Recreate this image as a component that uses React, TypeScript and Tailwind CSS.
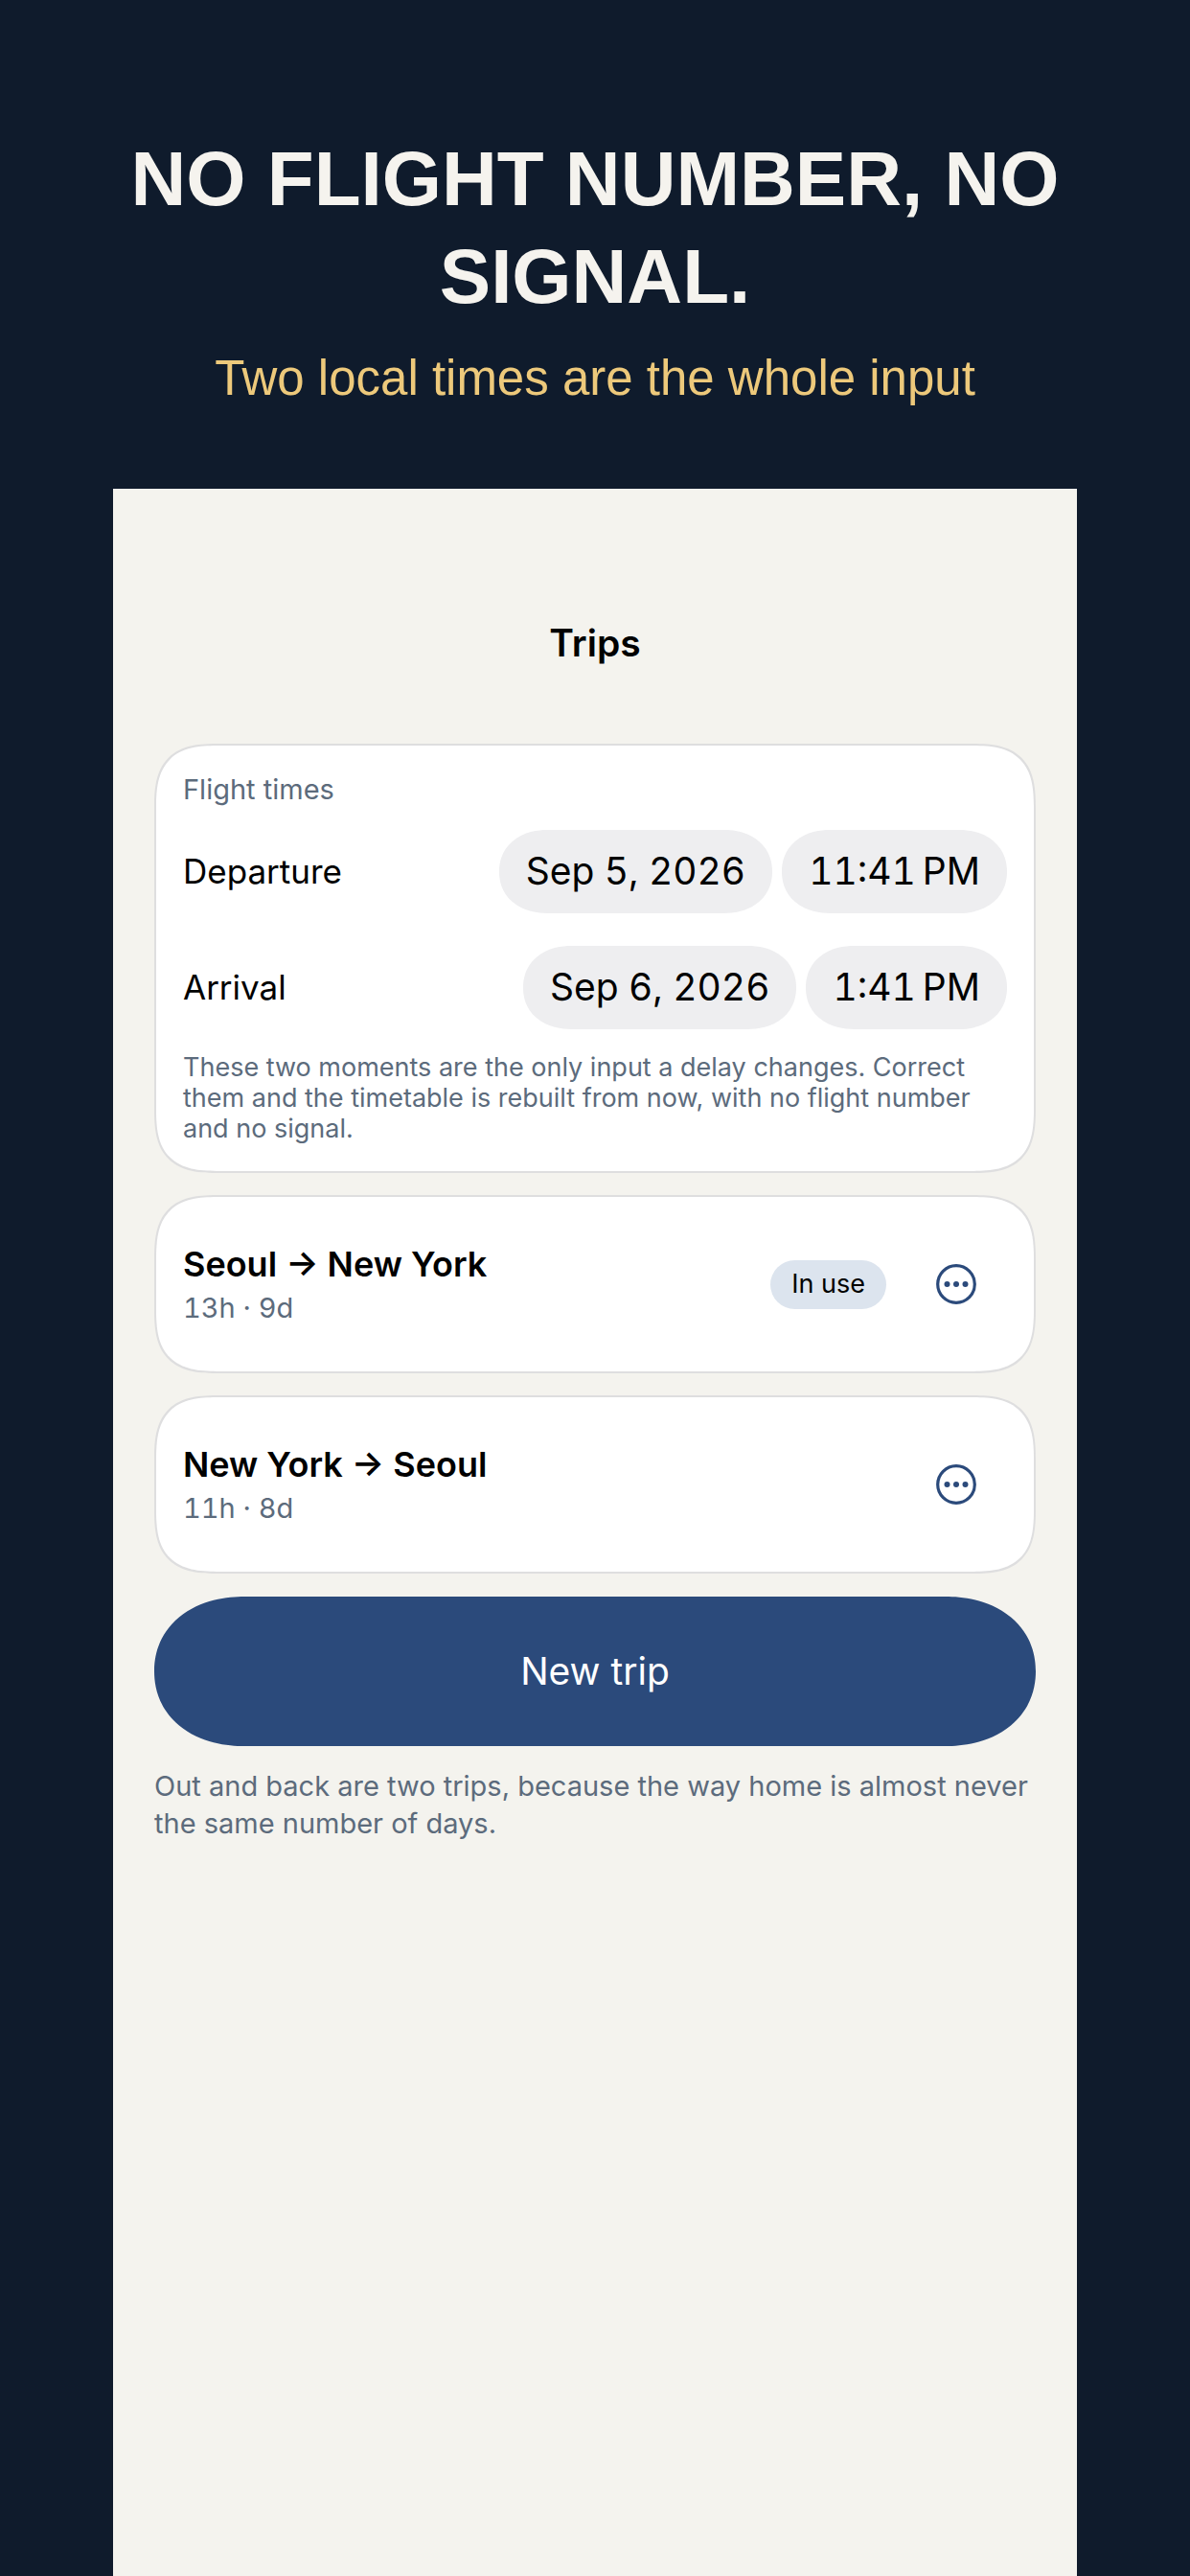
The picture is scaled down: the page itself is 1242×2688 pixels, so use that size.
type TripProps = { from: string; to: string; detail: string; inUse?: boolean };
type MomentProps = { id: string; label: string; date: string; time: string };

// Continuous-curvature corners where the browser has them, plain round ones elsewhere.
const card =
  "rounded-[50px] border-2 border-[#dededf] bg-white px-7 supports-[corner-shape:squircle]:rounded-[68px] [corner-shape:superellipse(1.5)]";
const pill =
  "h-[87px] rounded-full bg-[#eeeef0] px-7 text-[39px] tabular-nums whitespace-nowrap supports-[corner-shape:squircle]:rounded-[50px/43px] [corner-shape:superellipse(1.1)]";

function MoreIcon() {
  return (
    <svg viewBox="0 0 42 42" className="size-[42px]" fill="none" aria-hidden="true">
      <circle cx="21" cy="21" r="19.3" stroke="currentColor" strokeWidth="3.2" />
      <circle cx="11.5" cy="21" r="3" fill="currentColor" />
      <circle cx="21" cy="21" r="3" fill="currentColor" />
      <circle cx="30.5" cy="21" r="3" fill="currentColor" />
    </svg>
  );
}

function Moment({ id, label, date, time }: MomentProps) {
  return (
    <div role="group" aria-labelledby={id} className="flex items-center gap-2.5">
      <span id={id} className="mr-auto text-[35px]">
        {label}
      </span>
      <button type="button" className={pill}>
        {date}
      </button>
      <button type="button" className={pill}>
        {time}
      </button>
    </div>
  );
}

function Trip({ from, to, detail, inUse }: TripProps) {
  return (
    <li className={`${card} flex h-[186px] items-center`}>
      <div className="mr-auto pt-1">
        <h2 className="text-[36px] leading-[46px] font-semibold">
          {from} → {to}
        </h2>
        <p className="text-[29px] leading-[46px] tabular-nums text-[#5c6b7c]">{detail}</p>
      </div>
      {inUse && (
        <span className="mr-5 flex h-[51px] items-center rounded-full bg-[#dce4ee] px-[22px] text-[27px]">
          In use
        </span>
      )}
      <button
        type="button"
        aria-label={`Options for ${from} to ${to}`}
        className="flex h-24 w-[106px] items-center justify-center text-[#2b4a7b]"
      >
        <MoreIcon />
      </button>
    </li>
  );
}

export default function App() {
  return (
    <div className="flex min-h-screen flex-col bg-[#0f1b2c] px-[118px]">
      <header className="pt-[136px] pb-[76px] text-center font-['Liberation_Sans',Arial,sans-serif]">
        <h1 className="text-[80px] leading-[102px] font-bold text-[#f5f3ee]">
          NO FLIGHT NUMBER, NO SIGNAL.
        </h1>
        <p className="mt-4 text-[51px] leading-[78px] text-[#edc97b]">
          Two local times are the whole input
        </p>
      </header>
      <main className="flex-1 bg-[#f4f3ee] px-[43px] pb-24 font-[Inter,sans-serif] text-black">
        <h1 className="pt-[136px] pb-[80px] text-center text-[39px] leading-[50px] font-semibold">
          Trips
        </h1>
        <section className={`${card} pt-[26px] pb-7`}>
          <h2 className="text-[29px] leading-[40px] text-[#5c6b7c]">Flight times</h2>
          <div className="mt-[22px] flex flex-col gap-[34px]">
            <Moment id="departure" label="Departure" date="Sep 5, 2026" time={"11:41\u202fPM"} />
            <Moment id="arrival" label="Arrival" date="Sep 6, 2026" time={"1:41\u202fPM"} />
          </div>
          <p className="mt-6 text-[27px] leading-[32px] text-[#5c6b7c]">
            These two moments are the only input a delay changes. Correct them and the timetable is
            rebuilt from now, with no flight number and no signal.
          </p>
        </section>
        <ul className="mt-[23px] flex flex-col gap-[23px]">
          <Trip from="Seoul" to="New York" detail="13h · 9d" inUse />
          <Trip from="New York" to="Seoul" detail="11h · 8d" />
        </ul>
        <button
          type="button"
          className="mt-6 h-[156px] w-full rounded-full bg-[#2b4a7b] text-[39px] text-white supports-[corner-shape:squircle]:rounded-[94px/78px] [corner-shape:superellipse(1.1)]"
        >
          New trip
        </button>
        <p className="mt-[22px] text-[29px] leading-[39px] text-[#5c6b7c]">
          Out and back are two trips, because the way home is almost never the same number of days.
        </p>
      </main>
    </div>
  );
}
